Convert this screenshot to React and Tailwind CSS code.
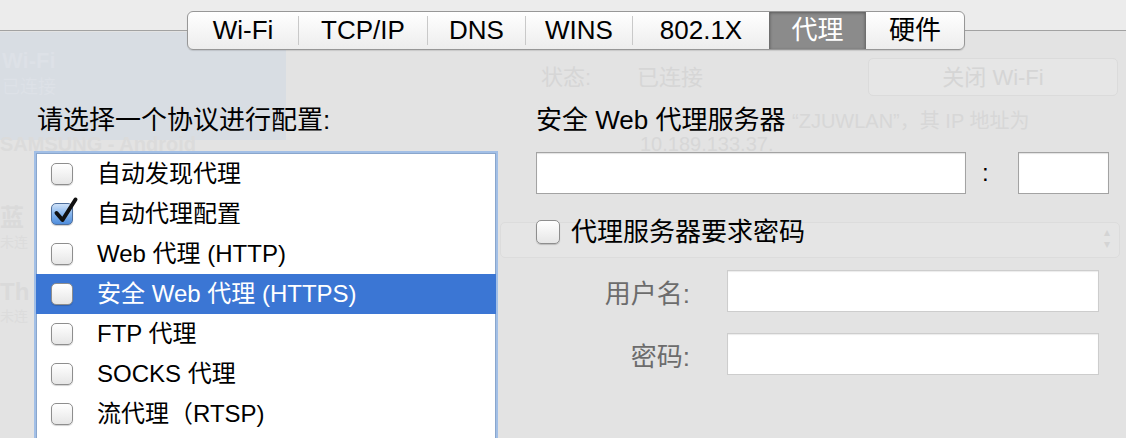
import React from "react";

const FONT = "font-['Liberation_Sans','Noto_Sans_CJK_SC',sans-serif]";

function Check({ checked = false, size = 22 }) {
  const sz = size === 24 ? "w-[24px] h-[24px]" : "w-[22px] h-[22px]";
  if (checked) {
    return (
      <div className={`relative shrink-0 ${sz} rounded-[5px] border border-[#4f6f9c] bg-linear-to-b from-[#cfe2f8] via-[#86b5ec] to-[#4f8ddc] shadow-[0_1px_1px_rgba(0,0,0,0.2)]`}>
        <svg className="absolute left-[1px] top-[-7px] overflow-visible" width="26" height="26" viewBox="0 0 26 26">
          <path d="M3.5 16 L9.5 23 L22.5 2.5" fill="none" stroke="#101010" strokeWidth="4" strokeLinecap="round" strokeLinejoin="round" />
        </svg>
      </div>
    );
  }
  return (
    <div className={`shrink-0 ${sz} rounded-[5px] border border-[#8e8e8e] bg-linear-to-b from-white to-[#e6e6e6] shadow-[0_1px_1px_rgba(0,0,0,0.18)]`} />
  );
}

function Ghost() {
  return (
    <div className="absolute inset-0">
      <div className="absolute left-0 top-0 w-full h-[31px] bg-[#ececec] border-b border-[#a2a2a2]" />
      <div className="absolute left-0 top-[32px] w-[286px] h-[108px] bg-[#d8dde3]" />
      <div className="absolute left-[2px] top-[44px] text-[22px] font-bold text-[#dde1e7]">Wi-Fi</div>
      <div className="absolute left-[2px] top-[74px] text-[18px] text-[#dde1e7]">已连接</div>
      <div className="absolute left-[0px] top-[137px] text-[20px] leading-[14px] font-bold text-[#dbdbdb]">SAMSUNG - Android</div>
      <div className="absolute left-[0px] top-[200px] text-[24px] font-bold text-[#dadada]">蓝</div>
      <div className="absolute left-[0px] top-[232px] text-[14px] text-[#dcdcdc]">未连</div>
      <div className="absolute left-[0px] top-[274px] text-[24px] font-bold text-[#dadada]">Th</div>
      <div className="absolute left-[0px] top-[306px] text-[14px] text-[#dcdcdc]">未连</div>

      <div className="absolute left-[541px] top-[61px] text-[22px] text-[#d6d6d6]">状态:</div>
      <div className="absolute left-[637px] top-[61px] text-[22px] text-[#d6d6d6]">已连接</div>
      <div className="absolute left-[868px] top-[58px] w-[250px] h-[38px] rounded-[5px] border border-[#dbdbdb] bg-[#e6e6e6] flex items-center justify-center text-[22px] text-[#d5d5d5]">关闭 Wi-Fi</div>
      <div className="absolute left-[792px] top-[106px] text-[20px] text-[#d7d7d7]">“ZJUWLAN”，其 IP 地址为</div>
      <div className="absolute left-[640px] top-[136px] text-[20px] leading-[16px] text-[#d7d7d7]">10.189.133.37.</div>
      <div className="absolute left-[500px] top-[222px] w-[620px] h-[36px] rounded-[5px] border border-[#dcdcdc] bg-[#e5e5e5]" />
      <div className="absolute left-[1104px] top-[226px] text-[12px] leading-[12px] text-[#d4d4d4]">▴<br />▾</div>
    </div>
  );
}

function Tabs() {
  const Div = () => <div className="w-px h-[29px] bg-[#c9c9c9] shrink-0" />;
  const seg = "h-full flex items-center justify-center text-[26px] shrink-0";
  return (
    <div className="ml-[187px] mt-[11px] flex items-center h-[39px] w-fit rounded-[6px] border border-[#979797] bg-linear-to-b from-white to-[#ededed] overflow-hidden shadow-[0_1px_1px_rgba(0,0,0,0.12)]">
      <div className={`${seg} w-[110px]`}>Wi-Fi</div>
      <Div />
      <div className={`${seg} w-[128px]`}>TCP/IP</div>
      <Div />
      <div className={`${seg} w-[97px]`}>DNS</div>
      <Div />
      <div className={`${seg} w-[106px]`}>WINS</div>
      <Div />
      <div className={`${seg} w-[136px]`}>802.1X</div>
      <div className={`${seg} w-[97px] bg-[#8b8b8b] text-white border-x border-[#6f6f6f] shadow-[inset_0_1px_3px_rgba(0,0,0,0.35)]`}>代理</div>
      <div className={`${seg} w-[98px]`}>硬件</div>
    </div>
  );
}

const rows = [
  { label: "自动发现代理" },
  { label: "自动代理配置", checked: true },
  { label: "Web 代理 (HTTP)" },
  { label: "安全 Web 代理 (HTTPS)", selected: true },
  { label: "FTP 代理" },
  { label: "SOCKS 代理" },
  { label: "流代理（RTSP)" },
];

function Left() {
  return (
    <div className="ml-[34px] w-[464px] shrink-0">
      <div className="mt-[55px] h-[30px] leading-[30px] pl-[3px] text-[26px]">请选择一个协议进行配置:</div>
      <div className="mt-[16px] h-[300px] border-2 border-[#a2bfe6] bg-white pt-[1px] shadow-[inset_0_0_0_1px_#8aa6cc]">
        {rows.map((r) => (
          <div
            key={r.label}
            className={`h-[40px] flex items-center ${r.selected ? "bg-[#3b76d4] text-white" : "text-black"}`}
          >
            <div className="ml-[15px]">
              <Check checked={r.checked} />
            </div>
            <div className="ml-[24px] text-[24px] leading-[40px]">{r.label}</div>
          </div>
        ))}
      </div>
    </div>
  );
}

function Right() {
  return (
    <div className="ml-[38px] w-[573px] shrink-0">
      <div className="mt-[55px] h-[30px] leading-[30px] text-[26px]">安全 Web 代理服务器</div>
      <div className="mt-[17px] flex items-center h-[42px]">
        <div className="w-[430px] h-[42px] border border-[#a3a3a3] bg-white shadow-[inset_0_1px_1px_rgba(0,0,0,0.12)]" />
        <div className="w-[52px] pl-[16px] text-[24px]">:</div>
        <div className="w-[91px] h-[42px] border border-[#a3a3a3] bg-white shadow-[inset_0_1px_1px_rgba(0,0,0,0.12)]" />
      </div>
      <div className="mt-[26px] flex items-center h-[24px]">
        <Check size={24} />
        <div className="ml-[11px] text-[26px] leading-[30px]">代理服务器要求密码</div>
      </div>
      <div className="mt-[26px] flex items-center h-[42px]">
        <div className="w-[154px] pt-[5px] text-right text-[26px] leading-[30px] text-[#6c6c6c]">用户名:</div>
        <div className="ml-[37px] w-[372px] h-[42px] border border-[#cdcdcd] bg-white shadow-[inset_0_1px_1px_rgba(0,0,0,0.08)]" />
      </div>
      <div className="mt-[21px] flex items-center h-[42px]">
        <div className="w-[154px] pt-[5px] text-right text-[26px] leading-[30px] text-[#6c6c6c]">密码:</div>
        <div className="ml-[37px] w-[372px] h-[42px] border border-[#cdcdcd] bg-white shadow-[inset_0_1px_1px_rgba(0,0,0,0.08)]" />
      </div>
    </div>
  );
}

export default function App() {
  return (
    <div className={`relative w-[1126px] h-[438px] overflow-hidden bg-[#e3e3e3] text-black ${FONT}`}>
      <Ghost />
      <div className="relative">
        <Tabs />
        <div className="flex">
          <Left />
          <Right />
        </div>
      </div>
    </div>
  );
}
